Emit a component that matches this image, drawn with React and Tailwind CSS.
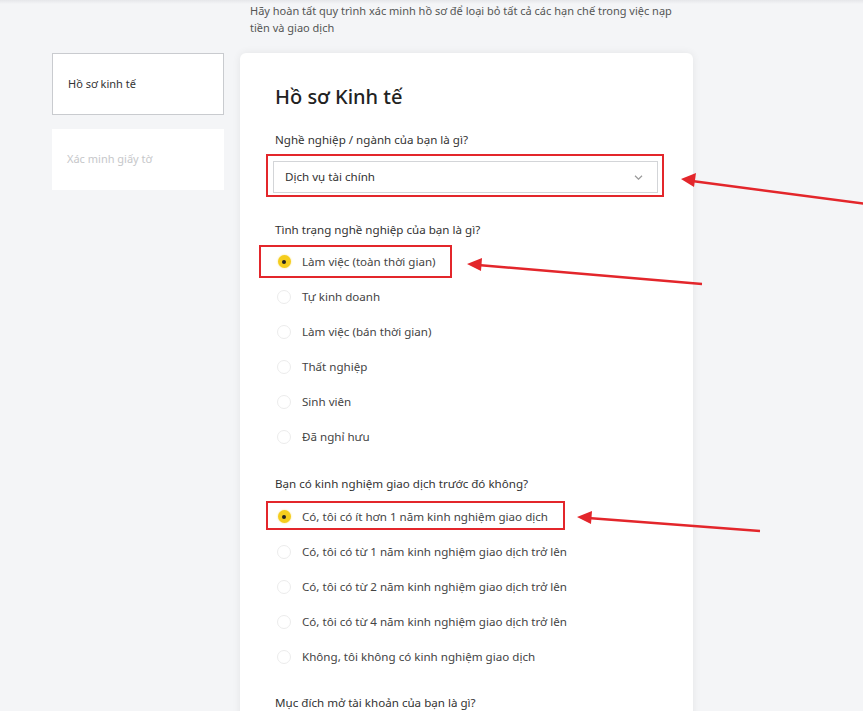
const careerStatus = [
  "Làm việc (toàn thời gian)",
  "Tự kinh doanh",
  "Làm việc (bán thời gian)",
  "Thất nghiệp",
  "Sinh viên",
  "Đã nghỉ hưu",
];

const experience = [
  "Có, tôi có ít hơn 1 năm kinh nghiệm giao dịch",
  "Có, tôi có từ 1 năm kinh nghiệm giao dịch trở lên",
  "Có, tôi có từ 2 năm kinh nghiệm giao dịch trở lên",
  "Có, tôi có từ 4 năm kinh nghiệm giao dịch trở lên",
  "Không, tôi không có kinh nghiệm giao dịch",
];

const Radio = ({ label, checked, boxed }) => (
  <div className="relative flex h-[35px] items-center">
    {boxed && (
      <div className={`pointer-events-none absolute top-[1px] bottom-[1px] -left-[16px] border-2 border-[#e3262b] ${boxed}`} />
    )}
    <span className="ml-[2px] flex w-[14px] h-[14px] items-center justify-center rounded-full">
      {checked ? (
        <span className="flex h-[13px] w-[13px] items-center justify-center rounded-full bg-[#f5cd1d] shadow-[0_0_2px_rgba(245,205,29,0.6)]">
          <span className="h-[4px] w-[4px] rounded-full bg-[#222]" />
        </span>
      ) : (
        <span className="h-[14px] w-[14px] rounded-full border border-[#ececec]" />
      )}
    </span>
    <span className="ml-[11px] text-[11.6px] text-[#444]">{label}</span>
  </div>
);

const Arrows = () => (
  <svg className="pointer-events-none absolute inset-0" width="863" height="711">
    <g stroke="#e3262b" strokeWidth="2.5" fill="none">
      <line x1="866" y1="204" x2="692" y2="181" />
      <line x1="702" y1="284" x2="478" y2="265" />
      <line x1="760" y1="531" x2="588" y2="518" />
    </g>
    <g fill="#e3262b">
      <path d="M681,179 L696,173 L694,187 z" />
      <path d="M467,264 L482,258 L481,271 z" />
      <path d="M577,517 L592,511 L591,524 z" />
    </g>
  </svg>
);

export default function App() {
  return (
    <div className="relative h-[711px] w-[863px] overflow-hidden bg-[#f4f5f7] font-['Noto_Sans',sans-serif] text-[#333]">
      <div className="h-[4px] bg-gradient-to-b from-[#e6e7ea] to-[#f4f5f7]" />
      <div className="flex pl-[52px]">
        <aside className="mt-[49px] flex w-[172px] flex-col gap-[14px]">
          <div className="flex h-[62px] items-center border border-[#c9cbcf] bg-white px-[15px] text-[11px] text-[#333]">
            Hồ sơ kinh tế
          </div>
          <div className="flex h-[61px] items-center bg-white px-[15px] text-[11px] text-[#c6c7ca]">
            Xác minh giấy tờ
          </div>
        </aside>
        <main className="ml-[16px] w-[453px]">
          <p className="-mt-[2px] h-[51px] px-[10px] text-[11px] leading-[17px] text-[#555]">
            Hãy hoàn tất quy trình xác minh hồ sơ để loại bỏ tất cả các hạn chế trong việc nạp tiền và giao dịch
          </p>
          <section className="h-[700px] rounded-[6px] bg-white px-[35px] pt-[30px] shadow-[0_0_8px_rgba(0,0,0,0.07)]">
            <h1 className="text-[20px] font-medium leading-[28px] text-[#222]">Hồ sơ Kinh tế</h1>
            <div className="mt-[20px] text-[11.6px] leading-[18px] text-[#333]">Nghề nghiệp / ngành của bạn là gì?</div>
            <div className="relative mt-[12px] -ml-[2px]">
              <div className="pointer-events-none absolute -left-[7px] -top-[7px] -right-[6px] -bottom-[4px] border-2 border-[#e3262b]" />
              <div className="flex h-[32px] items-center justify-between border border-[#d3d5d8] bg-white pl-[11px] pr-[14px]">
                <span className="text-[11.6px] text-[#333]">Dịch vụ tài chính</span>
                <svg width="9" height="5" viewBox="0 0 9 5" fill="none" stroke="#999" strokeWidth="1.2">
                  <path d="M1 0.8l3.5 3.4 3.5-3.4" />
                </svg>
              </div>
            </div>
            <div className="mt-[28px] text-[11.6px] leading-[18px] text-[#333]">Tình trạng nghề nghiệp của bạn là gì?</div>
            <div className="mt-[5px] flex flex-col">
              {careerStatus.map((s, i) => (
                <Radio key={s} label={s} checked={i === 0} boxed={i === 0 ? "w-[193px]" : null} />
              ))}
            </div>
            <div className="mt-[21px] text-[11.6px] leading-[18px] text-[#333]">Bạn có kinh nghiệm giao dịch trước đó không?</div>
            <div className="mt-[6px] flex flex-col">
              {experience.map((s, i) => (
                <Radio key={s} label={s} checked={i === 0} boxed={i === 0 ? "w-[299px] !-left-[9px] !top-[2px] !bottom-[4px]" : null} />
              ))}
            </div>
            <div className="mt-[22px] text-[11.6px] leading-[14px] text-[#333]">Mục đích mở tài khoản của bạn là gì?</div>
          </section>
        </main>
      </div>
      <Arrows />
    </div>
  );
}
